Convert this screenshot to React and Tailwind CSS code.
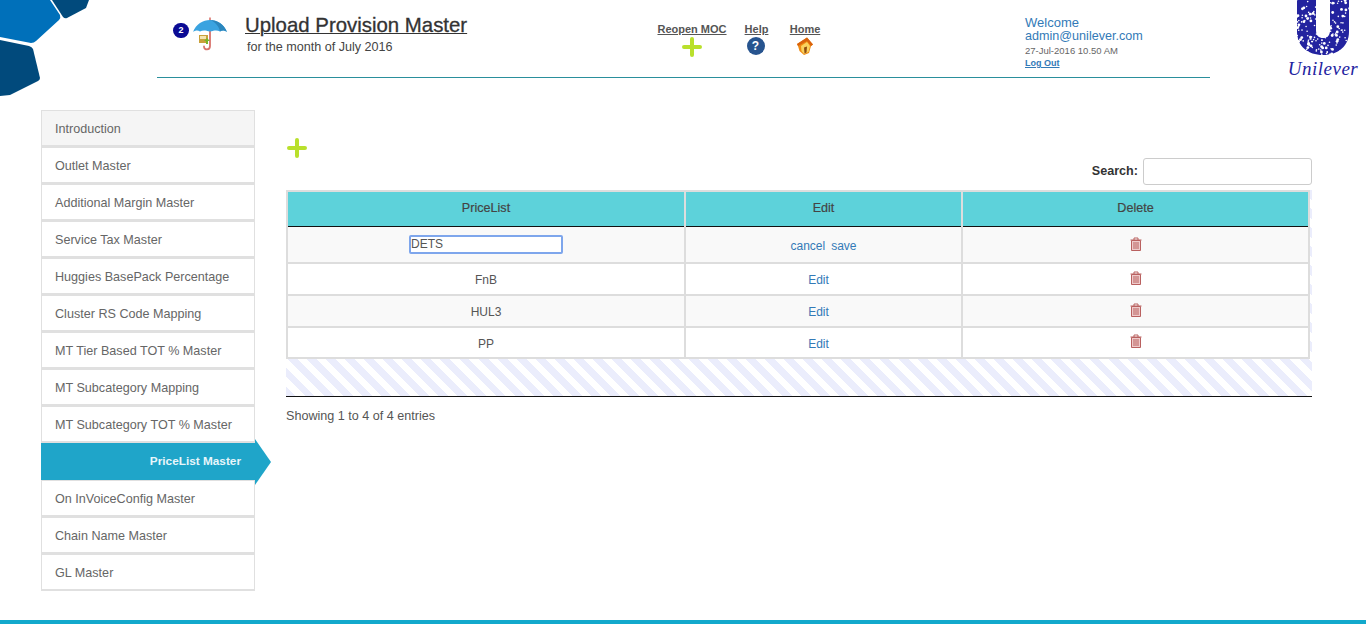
import React from 'react'

const menu = [
  'Introduction',
  'Outlet Master',
  'Additional Margin Master',
  'Service Tax Master',
  'Huggies BasePack Percentage',
  'Cluster RS Code Mapping',
  'MT Tier Based TOT % Master',
  'MT Subcategory Mapping',
  'MT Subcategory TOT % Master',
  'PriceList Master',
  'On InVoiceConfig Master',
  'Chain Name Master',
  'GL Master',
]

const rows = [
  { name: 'FnB', bg: 'bg-white', h: 'h-[32px]' },
  { name: 'HUL3', bg: 'bg-[#f9f9f9]', h: 'h-[32px]' },
  { name: 'PP', bg: 'bg-white', h: 'h-[31px]' },
]

function Plus({ className }) {
  return (
    <svg viewBox="0 0 20 20" className={className}>
      <path d="M10 2v16M2 10h16" stroke="#b9e02c" strokeWidth="4" strokeLinecap="round" fill="none" />
    </svg>
  )
}

function Trash() {
  return (
    <svg viewBox="0 0 12 14" className="h-[14px] w-[12px]" fill="none" stroke="#b9605f" strokeWidth="1">
      <path d="M0.5 3h11M4 3V1h4v2" />
      <path d="M1.5 3.500h9v10h-9z" fill="#eecaca" />
      <path d="M4 5v7M6 5v7M8 5v7" />
    </svg>
  )
}

function Umbrella() {
  return (
    <svg viewBox="0 0 34 34" className="h-[34px] w-[34px] shrink-0">
      <path d="M17 0.500v4" stroke="#d9736c" strokeWidth="1.600" />
      <path d="M17 14v15c0 4.500-6 4.500-6 0.500" stroke="#d9736c" strokeWidth="1.800" fill="none" strokeLinecap="round" />
      <path d="M0 15C3 7 10 3 17 3s14 4 17 12c-2.500-2-5-2-7-0.500-2.500-1.500-5-1.500-10 0-5-1.500-7.500-1.500-10 0C5 13 2.500 13 0 15z" fill="#3aa3e0" />
      <path d="M17 3c7 0 14 4 17 12-2.500-2-5-2-7-0.500C26 9 22 5 17 3z" fill="#2b86bd" />
      <path d="M6 18h9v8H6z" fill="#c9a13b" />
      <path d="M7 19h6v3H7z" fill="#f4e4b0" />
      <path d="M11 24l3-3 3 3h-2v3h-2v-3z" fill="#79b52b" />
    </svg>
  )
}

function HelpIcon() {
  return (
    <div className="flex h-[18px] w-[18px] items-center justify-center rounded-full bg-[#27548f] text-[12px] font-bold leading-none text-white">
      ?
    </div>
  )
}

function HomeIcon() {
  return (
    <svg viewBox="0 0 18 18" className="h-[18px] w-[18px]">
      <path d="M1 7L11 0.500l6 7-2 1.500-2 7-5 2-4.500-4L2 9z" fill="#ef8a12" />
      <path d="M1 7L11 0.500l6 7-2 1.500-4-5-8 4.500L2 9z" fill="#d9620e" />
      <path d="M5 9l6-4 3 4-1.500 6L8 17l-2.500-3z" fill="#f9d25f" />
      <path d="M8 10.500l3-1-0.500 6-2 1z" fill="#8f4c10" />
    </svg>
  )
}

function Corner() {
  return (
    <svg viewBox="0 0 90 96" className="mb-[-18px] h-[96px] w-[90px] shrink-0">
      <path d="M52 0h37l-3 8-19 10q-2 1-4-1z" fill="#014a7c" />
      <path d="M0 0h50l10 15q1 3-1 5L36 41q-2 2-5 2L0 37z" fill="#0070ba" />
      <path d="M0 40l29 6q3 1 4 3l7 29q0 2-2 3L10 95l-10 1z" fill="#014a7c" />
    </svg>
  )
}

// U mark, speckled so it reads like the crest at this size
function UnileverMark() {
  const specks = []
  for (let i = 0; i < 170; i++) {
    const x = Math.abs(Math.sin(i * 12.9898) * 43758.5453) % 54
    const y = Math.abs(Math.sin(i * 78.233) * 12543.1234) % 55
    const r = i % 3 === 0 ? 1.400 : 0.800
    specks.push(<circle key={i} cx={x.toFixed(1)} cy={y.toFixed(1)} r={r} fill="#fff" />)
  }
  return (
    <svg viewBox="0 0 54 55" className="h-[55px] w-[54px]">
      <path d="M1 0h19v30c0 6 3 8 7 8s7-2 7-8V0h19v32c0 14-11 23-26 23S1 46 1 32z" fill="#23239f" />
      {specks}
      <path d="M21 0h12v30c0 5-2 7-6 7s-6-2-6-7z" fill="#fff" />
    </svg>
  )
}

export default function App() {
  return (
    <div className="flex min-h-[624px] flex-col bg-white font-['Liberation_Sans',Arial,sans-serif] text-[12.600px] text-[#555]">
      {/* Header */}
      <div className="flex">
        <Corner />
        <div className="ml-[67px] flex h-[78px] w-[1053px] border-b border-[#2a8f9c]">
          <div className="ml-[16px] mt-[23px] flex h-[15px] w-[16px] items-center justify-center rounded-full bg-[#0b0b94] text-[9px] font-bold text-white">
            2
          </div>
          <div className="ml-[4px] mt-[17px]">
            <Umbrella />
          </div>
          <div className="ml-[18px] mt-[13px] w-[413px]">
            <div className="text-[20.400px] font-normal leading-[24px] text-[#333] underline decoration-[1px] underline-offset-1 [-webkit-text-stroke:0.3px_#333]">
              Upload Provision Master
            </div>
            <div className="ml-[2px] mt-[3px] text-[12.600px] leading-[15px] text-[#444]">for the month of July 2016</div>
          </div>
          <div className="mt-[23px] flex h-[44px] w-[367px]">
            <div className="flex w-[68px] flex-col items-center">
              <span className="whitespace-nowrap text-[11px] font-bold leading-[13px] text-[#555] underline">Reopen MOC</span>
              <Plus className="mt-[1px] h-[20px] w-[20px]" />
            </div>
            <div className="ml-[19px] flex w-[23px] flex-col items-center">
              <span className="text-[11px] font-bold leading-[13px] text-[#555] underline">Help</span>
              <div className="mr-[2px] mt-[1px]"><HelpIcon /></div>
            </div>
            <div className="ml-[22px] flex w-[30px] flex-col items-center">
              <span className="text-[11px] font-bold leading-[13px] text-[#555] underline">Home</span>
              <div className="mt-[1px]"><HomeIcon /></div>
            </div>
          </div>
          <div className="mt-[15px] flex flex-col">
            <span className="text-[13px] leading-[15px] text-[#337ab7]">Welcome</span>
            <span className="text-[12.600px] leading-[13px] text-[#337ab7]">admin@unilever.com</span>
            <span className="mt-[2px] text-[9.500px] leading-[11px] text-[#666]">27-Jul-2016 10.50 AM</span>
            <span className="mt-[2px] text-[9px] font-bold leading-[11px] text-[#337ab7] underline">Log Out</span>
          </div>
        </div>
        <div className="ml-[74px] flex h-[78px] w-[78px] flex-col items-center">
          <UnileverMark />
          <span className="mt-[4px] font-['Liberation_Serif',serif] text-[19px] italic leading-[19px] tracking-[0.5px] text-[#23239f]">Unilever</span>
        </div>
      </div>

      {/* Body */}
      <div className="ml-[41px] mt-[32px] flex">
        <div className="w-[214px] shrink-0">
          {menu.map((item, i) =>
            item === 'PriceList Master' ? (
              <div key={item} className="relative flex h-[37px] items-center justify-end bg-[#1fa5c9] pr-[14px] text-[11.800px] font-bold text-[#e8f6fb]">
                {item}
                <div className="absolute left-[214px] top-[-4px] h-0 w-0 border-y-[23px] border-l-[16px] border-y-transparent border-l-[#1fa5c9]" />
              </div>
            ) : (
              <div
                key={item}
                className={`flex h-[37px] items-center border border-b-2 border-[#e0e0e0] pl-[13px] pt-[2px] text-[#666] ${i === 0 ? 'bg-[#f5f5f5]' : 'bg-white'}`}
              >
                {item}
              </div>
            )
          )}
        </div>

        <div className="ml-[31px] w-[1026px]">
          <Plus className="ml-[1px] mt-[28px] h-[20px] w-[20px]" />
          <div className="flex h-[27px] items-center justify-end">
            <span className="mb-[1px] mr-[5px] font-bold text-[#333]">Search:</span>
            <div className="h-[27px] w-[169px] rounded-[3px] border border-[#ccc] bg-white" />
          </div>
          <div className="mt-[5px] h-[207px] border-b border-[#111] bg-[repeating-linear-gradient(45deg,#ebedfc_0,#ebedfc_7px,#ffffff_7px,#ffffff_13.500px)]">
            <table className="w-[1024px] table-fixed border-collapse text-center">
              <thead>
                <tr className="h-[35px] bg-[#5dd2da] text-[#444]">
                  <th className="w-[398px] border-2 border-b-0 border-[#ddd] font-normal [-webkit-text-stroke:0.2px_#444]">PriceList</th>
                  <th className="w-[277px] border-2 border-b-0 border-[#ddd] font-normal [-webkit-text-stroke:0.2px_#444]">Edit</th>
                  <th className="border-2 border-b-0 border-[#ddd] font-normal [-webkit-text-stroke:0.2px_#444]">Delete</th>
                </tr>
              </thead>
              <tbody>
                <tr className="h-[37px] bg-[#f9f9f9]">
                  <td className="border-2 border-t-[1px] border-[#ddd] border-t-[#111]">
                    <div className="ml-auto mr-[121px] flex h-[19px] w-[154px] items-center rounded-[2px] border-2 border-[#7ea6ec] bg-white text-[12px] text-[#555]">
                      DETS
                    </div>
                  </td>
                  <td className="border-2 border-t-[1px] border-[#ddd] border-t-[#111] pt-[4px] text-[12px] text-[#337ab7]">
                    cancel<span className="ml-[6px]">save</span>
                  </td>
                  <td className="border-2 border-t-[1px] border-[#ddd] border-t-[#111]">
                    <div className="flex justify-center"><Trash /></div>
                  </td>
                </tr>
                {rows.map((r) => (
                  <tr key={r.name} className={`${r.h} ${r.bg}`}>
                    <td className="border-2 border-[#ddd] pt-[2px] text-[12px]">{r.name}</td>
                    <td className="border-2 border-[#ddd] pr-[10px] pt-[2px] text-[12px] text-[#337ab7]">Edit</td>
                    <td className="border-2 border-[#ddd]">
                      <div className="mb-[3px] flex justify-center"><Trash /></div>
                    </td>
                  </tr>
                ))}
              </tbody>
            </table>
          </div>
          <div className="mt-[10px] text-[12.600px] text-[#555]">Showing 1 to 4 of 4 entries</div>
        </div>
      </div>

      <div className="mt-auto h-[4px] bg-[#12a9cc]" />
    </div>
  )
}
